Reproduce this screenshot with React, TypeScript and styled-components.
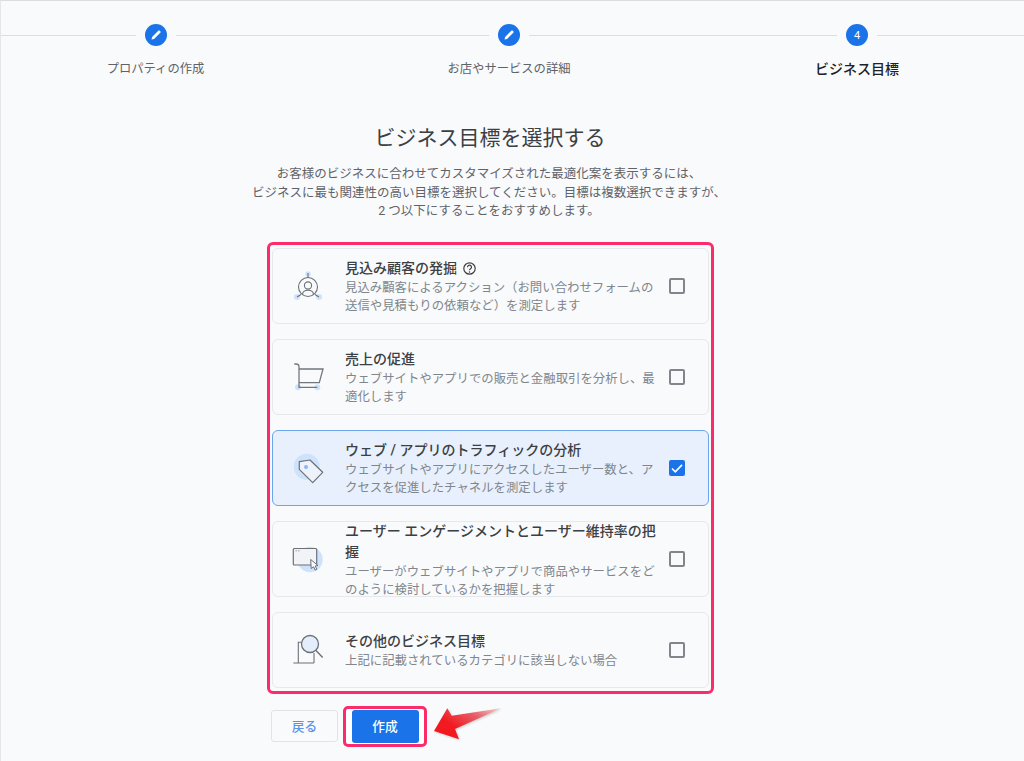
import styled, { createGlobalStyle } from "styled-components";

const GlobalStyle = createGlobalStyle`
  html, body {
    margin: 0;
    padding: 0;
    background: #f9fafc;
    font-family: "Roboto", "Noto Sans CJK JP", sans-serif;
    color: #3c4043;
  }
  * { box-sizing: border-box; }
`;

const Page = styled.div`
  width: 1024px;
  height: 761px;
  overflow: hidden;
  position: relative;
  border-top: 1px solid #dadce0;
  border-left: 1px solid #e4e6ea;
`;

const Stepper = styled.div`
  display: grid;
  grid-template-columns: 309px 398px 298px 18px;
  padding-top: 22px;
`;

const Step = styled.div`
  display: flex;
  flex-direction: column;
  align-items: center;
`;

const Rail = styled.div`
  width: 100%;
  height: 24px;
  display: flex;
  align-items: center;
`;

const RailLine = styled.div`
  flex: 1;
  height: 1px;
  background: #dcdee1;
`;

const StepDot = styled.div`
  width: 22px;
  height: 22px;
  margin: 0 9px;
  border-radius: 50%;
  background: #1a73e8;
  color: #fff;
  font-size: 11px;
  display: flex;
  align-items: center;
  justify-content: center;
`;

const StepLabel = styled.div<{ $active?: boolean }>`
  margin-top: 12px;
  line-height: 20px;
  font-size: ${(p) => (p.$active ? "14px" : "12.3px")};
  font-weight: ${(p) => (p.$active ? 500 : 400)};
  color: ${(p) => (p.$active ? "#202124" : "#5f6368")};
`;

const Main = styled.div`
  width: 447px;
  margin: 44px 0 0 266px;
`;

const Title = styled.h1`
  margin: 0 0 12px -40px;
  width: 526px;
  font-size: 21px;
  line-height: 30px;
  font-weight: 400;
  text-align: center;
  color: #3c4043;
`;

const Description = styled.p`
  margin: 0 0 21px -41px;
  width: 526px;
  font-size: 12.5px;
  line-height: 18.5px;
  text-align: center;
  color: #5f6368;
`;

const GoalList = styled.div`
  position: relative;
  display: flex;
  flex-direction: column;
  gap: 15px;
  padding: 6px 5px;
  height: 452px;
`;

const Highlight = styled.div`
  position: absolute;
  left: 0;
  top: 0;
  right: 0;
  bottom: 0;
  border: 3px solid #fb2c6c;
  border-radius: 6px;
  pointer-events: none;
`;

const Card = styled.div<{ $selected?: boolean }>`
  height: 76px;
  flex: none;
  display: flex;
  align-items: center;
  overflow: hidden;
  border-radius: 6px;
  border: 1px solid ${(p) => (p.$selected ? "#6aa5ee" : "#e6e8eb")};
  background: ${(p) => (p.$selected ? "#e8f0fe" : "#f9fafc")};
`;

const IconSlot = styled.div`
  width: 72px;
  padding-right: 2px;
  flex: none;
  display: flex;
  justify-content: center;
`;

const CardBody = styled.div`
  flex: 1;
  min-width: 0;
  padding-top: 2px;
`;

const CardTitle = styled.div`
  font-size: 14px;
  line-height: 21px;
  font-weight: 500;
  color: #3c4043;
  display: flex;
  align-items: center;
  gap: 6px;
`;

const CardText = styled.div`
  font-size: 12.4px;
  line-height: 18px;
  white-space: nowrap;
  color: #80868b;
`;

const CheckSlot = styled.div`
  width: 32px;
  margin-right: 15px;
  flex: none;
  display: flex;
  justify-content: center;
`;

const CheckBox = styled.div<{ $checked?: boolean }>`
  width: 16px;
  height: 16px;
  border-radius: 2px;
  border: ${(p) => (p.$checked ? "none" : "2px solid #80868b")};
  background: ${(p) => (p.$checked ? "#1a73e8" : "transparent")};
  display: flex;
  align-items: center;
  justify-content: center;
`;

const Actions = styled.div`
  display: flex;
  align-items: center;
  gap: 5px;
  margin: 12px 0 0 4px;
  position: relative;
`;

const BackButton = styled.button`
  width: 67px;
  height: 32px;
  padding: 0 0 2px;
  border: 1px solid #e1e3e6;
  border-radius: 3px;
  background: #f9fafc;
  color: #5b93e8;
  font: 500 12.7px "Roboto", "Noto Sans CJK JP", sans-serif;
`;

const CreateWrap = styled.div`
  padding: 1px 5.5px;
  border: 3px solid #fb2c6c;
  border-radius: 5px;
  background: #fff;
`;

const CreateButton = styled.button`
  display: block;
  width: 67px;
  height: 33px;
  padding: 0 0 2px;
  border: none;
  border-radius: 3px;
  background: #1a73e8;
  color: #fff;
  font: 500 12.7px "Roboto", "Noto Sans CJK JP", sans-serif;
`;

const Arrow = styled.svg`
  position: absolute;
  left: 159px;
  top: -2px;
  filter: drop-shadow(1px 1px 1px rgba(120, 120, 120, 0.35));
`;

const Pencil = () => (
  <svg width="14" height="14" viewBox="0 0 14 14">
    <path d="M2.500 11.500l.6-2.600L9.300 2.700a1 1 0 0 1 1.400 0l.6.6a1 1 0 0 1 0 1.400L5.100 10.900z" fill="#fff" />
  </svg>
);

const LeadIcon = () => (
  <svg width="32" height="32" viewBox="0 0 32 32" fill="none">
    <circle cx="16" cy="4" r="2.800" fill="#cfe2fb" />
    <circle cx="5" cy="27" r="3" fill="#cfe2fb" />
    <circle cx="27" cy="27" r="3" fill="#cfe2fb" />
    <path d="M16 3v5M5 27l4-2.500M27 27l-4-2.500" stroke="#6b7177" strokeWidth="1.100" />
    <circle cx="16" cy="17" r="9.500" stroke="#6b7177" strokeWidth="1.100" />
    <circle cx="16" cy="15.500" r="3.600" stroke="#6b7177" strokeWidth="1.100" />
    <path d="M10.500 24c1-5 10-5 11 0" stroke="#6b7177" strokeWidth="1.100" />
  </svg>
);

const CartIcon = () => (
  <svg width="32" height="32" viewBox="0 0 32 32" fill="none">
    <circle cx="6" cy="26.300" r="3" fill="#cfe2fb" />
    <circle cx="25.300" cy="26.300" r="3" fill="#cfe2fb" />
    <path
      d="M2.300 3h1.700c1.800 0 3 1.200 3 3v20.300h18.300M7 8h24l-3.700 13.700H7"
      stroke="#72777d"
      strokeWidth="1.300"
    />
  </svg>
);

const TagIcon = () => (
  <svg width="32" height="32" viewBox="0 0 32 32" fill="none">
    <circle cx="14.700" cy="14.700" r="13" fill="#cfe2fb" />
    <path d="M7.300 9.700L18 8l12.700 12.300-10 10.400L7.300 17.300z" fill="#eef3fb" stroke="#6b7177" strokeWidth="1.200" strokeLinejoin="round" />
    <circle cx="14" cy="15" r="2" fill="#8ab8f5" />
  </svg>
);

const WindowIcon = () => (
  <svg width="32" height="32" viewBox="0 0 32 32" fill="none">
    <circle cx="18" cy="16.500" r="12.700" fill="#cfe2fb" />
    <rect x="1.300" y="5.500" width="23.400" height="16.500" rx="1" fill="#f1f3f6" stroke="#6b7177" strokeWidth="1.200" />
    <path d="M3.500 7.800h1.500M6 7.800h1.500" stroke="#9aa0a6" />
    <path d="M18.700 16.500l7.300 6-2.800.5 1.600 3.300-1.600.8-1.600-3.300-2.400 1.700z" fill="#f9fafc" stroke="#6b7177" />
  </svg>
);

const SearchDocIcon = () => (
  <svg width="32" height="32" viewBox="0 0 32 32" fill="none">
    <path d="M1.300 29H22M6.300 29V8.300H10M22 29V19" stroke="#6b7177" strokeWidth="1.100" />
    <circle cx="18" cy="10" r="8.500" fill="#e3edfc" stroke="#6b7177" strokeWidth="1.300" />
    <path d="M24 16.500l6.700 7" stroke="#6b7177" strokeWidth="1.400" />
  </svg>
);

const HelpIcon = () => (
  <svg width="13" height="13" viewBox="0 0 13 13" fill="none">
    <circle cx="6.500" cy="6.500" r="5.700" stroke="#3c4043" strokeWidth="1.200" />
    <path d="M4.500 5.200a2 2 0 1 1 3.100 1.600c-.7.500-1.100.8-1.100 1.400" stroke="#3c4043" strokeWidth="1.200" />
    <circle cx="6.500" cy="9.900" r=".75" fill="#3c4043" />
  </svg>
);

const CheckMark = () => (
  <svg width="14" height="14" viewBox="0 0 14 14" fill="none">
    <path d="M2 7.500l3.300 3.300L12 3.800" stroke="#fff" strokeWidth="1.700" />
  </svg>
);

const goals = [
  {
    title: "見込み顧客の発掘",
    help: true,
    text: ["見込み顧客によるアクション（お問い合わせフォームの", "送信や見積もりの依頼など）を測定します"],
    icon: <LeadIcon />,
  },
  {
    title: "売上の促進",
    text: ["ウェブサイトやアプリでの販売と金融取引を分析し、最", "適化します"],
    icon: <CartIcon />,
  },
  {
    title: "ウェブ / アプリのトラフィックの分析",
    selected: true,
    text: ["ウェブサイトやアプリにアクセスしたユーザー数と、ア", "クセスを促進したチャネルを測定します"],
    icon: <TagIcon />,
  },
  {
    title: "ユーザー エンゲージメントとユーザー維持率の把握",
    text: ["ユーザーがウェブサイトやアプリで商品やサービスをど", "のように検討しているかを把握します"],
    icon: <WindowIcon />,
  },
  {
    title: "その他のビジネス目標",
    text: ["上記に記載されているカテゴリに該当しない場合"],
    icon: <SearchDocIcon />,
  },
];

export default function App() {
  return (
    <Page>
      <GlobalStyle />
      <Stepper>
        <Step>
          <Rail>
            <RailLine />
            <StepDot><Pencil /></StepDot>
            <RailLine />
          </Rail>
          <StepLabel>プロパティの作成</StepLabel>
        </Step>
        <Step>
          <Rail>
            <RailLine />
            <StepDot><Pencil /></StepDot>
            <RailLine />
          </Rail>
          <StepLabel>お店やサービスの詳細</StepLabel>
        </Step>
        <Step>
          <Rail>
            <RailLine />
            <StepDot>4</StepDot>
            <RailLine />
          </Rail>
          <StepLabel $active>ビジネス目標</StepLabel>
        </Step>
        <Rail>
          <RailLine />
        </Rail>
      </Stepper>
      <Main>
        <Title>ビジネス目標を選択する</Title>
        <Description>
          お客様のビジネスに合わせてカスタマイズされた最適化案を表示するには、
          <br />
          ビジネスに最も関連性の高い目標を選択してください。目標は複数選択できますが、
          <br />
          2 つ以下にすることをおすすめします。
        </Description>
        <GoalList>
          {goals.map((goal) => (
            <Card key={goal.title} $selected={goal.selected}>
              <IconSlot>{goal.icon}</IconSlot>
              <CardBody>
                <CardTitle>
                  <span>{goal.title}</span>
                  {goal.help && <HelpIcon />}
                </CardTitle>
                {goal.text.map((line) => (
                  <CardText key={line}>{line}</CardText>
                ))}
              </CardBody>
              <CheckSlot>
                <CheckBox $checked={goal.selected}>{goal.selected && <CheckMark />}</CheckBox>
              </CheckSlot>
            </Card>
          ))}
          <Highlight />
        </GoalList>
        <Actions>
          <BackButton>戻る</BackButton>
          <CreateWrap>
            <CreateButton>作成</CreateButton>
          </CreateWrap>
          <Arrow width="74" height="44" viewBox="0 0 74 44">
            <defs>
              <linearGradient id="arrowFade" x1="0.100" y1="0.700" x2="1" y2="0.100">
                <stop offset="0.200" stopColor="#f21a20" />
                <stop offset="0.650" stopColor="#e6606a" />
                <stop offset="1" stopColor="#f2c4c0" />
              </linearGradient>
            </defs>
            <path d="M4 27L17.300 4.300l4.400 7.400L71 4.300 25 25l4 10.300z" fill="url(#arrowFade)" />
          </Arrow>
        </Actions>
      </Main>
    </Page>
  );
}
